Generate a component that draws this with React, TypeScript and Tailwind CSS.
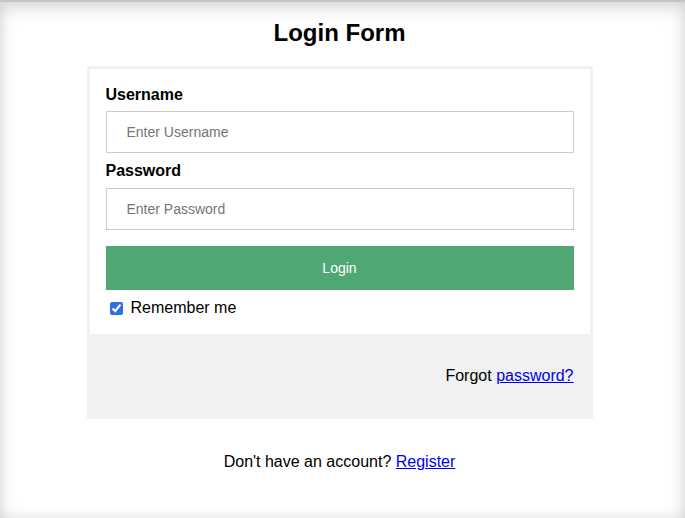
import React from "react";

export default function App() {
  return (
    <div
      className="relative w-[685px] h-[518px] bg-white overflow-hidden text-black"
      style={{ fontFamily: '"Liberation Sans", Arial, sans-serif' }}
    >
      <div className="pointer-events-none absolute inset-0 border-t-2 border-[#c4c4c4] shadow-[inset_0_6px_18px_rgba(0,0,0,0.13),inset_0_0_14px_rgba(0,0,0,0.08)]" />
      <div className="pt-[19px] pr-[6px] flex flex-col items-center">
        <h2 className="text-[24px] font-bold leading-[28px] m-0">Login Form</h2>
        <form
          className="mt-[19px] w-[506px] border-[3px] border-[#f1f1f1]"
          onSubmit={(e) => e.preventDefault()}
        >
          <div className="px-4 pt-[17px] pb-[17px] bg-white">
            <label className="block text-[16px] font-bold leading-[18px]">Username</label>
            <input
              type="text"
              placeholder="Enter Username"
              className="block w-full mt-[7px] mb-[9px] h-[42px] px-[20px] border border-[#cccccc] text-[14px] placeholder:text-[#757575] outline-none"
              style={{ fontFamily: '"Liberation Sans", Arial, sans-serif' }}
            />
            <label className="block text-[16px] font-bold leading-[18px]">Password</label>
            <input
              type="password"
              placeholder="Enter Password"
              className="block w-full mt-[8px] h-[42px] px-[20px] border border-[#cccccc] text-[14px] placeholder:text-[#757575] outline-none"
              style={{ fontFamily: '"Liberation Sans", Arial, sans-serif' }}
            />
            <button
              type="submit"
              className="block w-full mt-[16px] h-[44px] bg-[#4fa774] text-white text-[14px]"
              style={{ fontFamily: '"Liberation Sans", Arial, sans-serif' }}
            >
              Login
            </button>
            <label className="flex items-center mt-[9px] text-[16px] leading-[18px]">
              <input
                type="checkbox"
                defaultChecked
                className="w-[13px] h-[13px] ml-[4px] mr-[8px] accent-[#2f6fe6]"
              />
              Remember me
            </label>
          </div>
          <div className="h-[82px] bg-[#f1f1f1] px-4 pt-[33px] flex justify-end">
            <span className="text-[16px] leading-[18px]">
              Forgot{" "}
              <a href="#" className="text-[#0000ee] underline">
                password?
              </a>
            </span>
          </div>
        </form>
        <p className="mt-[34px] text-[16px] leading-[18px]">
          Don't have an account?{" "}
          <a href="#" className="text-[#0000ee] underline">
            Register
          </a>
        </p>
      </div>
    </div>
  );
}
